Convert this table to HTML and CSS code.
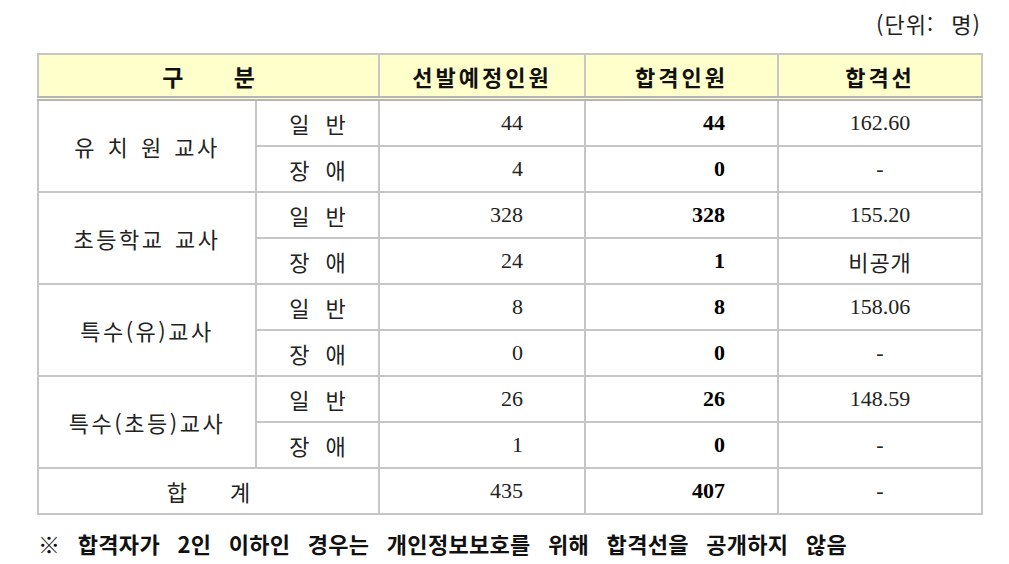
FILE: index.html
```html
<!DOCTYPE html>
<html lang="ko">
<head>
<meta charset="utf-8">
<title>합격 현황</title>
<link rel="stylesheet" href="styles.css">
</head>
<body>
<div class="page">
  <div class="unit">(단위: 명)</div>
  <table class="tbl">
    <colgroup>
      <col class="c1"><col class="c2"><col class="c3"><col class="c4"><col class="c5">
    </colgroup>
    <thead>
      <tr>
        <th colspan="2"><span class="wide">구 분</span></th>
        <th>선발예정인원</th>
        <th>합격인원</th>
        <th>합격선</th>
      </tr>
    </thead>
    <tbody>
      <tr>
        <td rowspan="2" class="cat">유 치 원 교사</td>
        <td class="sub">일 반</td>
        <td class="num plan">44</td>
        <td class="num pass">44</td>
        <td class="num cut">162.60</td>
      </tr>
      <tr>
        <td class="sub">장 애</td>
        <td class="num plan">4</td>
        <td class="num pass">0</td>
        <td class="num cut">-</td>
      </tr>
      <tr>
        <td rowspan="2" class="cat">초등학교 교사</td>
        <td class="sub">일 반</td>
        <td class="num plan">328</td>
        <td class="num pass">328</td>
        <td class="num cut">155.20</td>
      </tr>
      <tr>
        <td class="sub">장 애</td>
        <td class="num plan">24</td>
        <td class="num pass">1</td>
        <td class="cut kr">비공개</td>
      </tr>
      <tr>
        <td rowspan="2" class="cat">특수(유)교사</td>
        <td class="sub">일 반</td>
        <td class="num plan">8</td>
        <td class="num pass">8</td>
        <td class="num cut">158.06</td>
      </tr>
      <tr>
        <td class="sub">장 애</td>
        <td class="num plan">0</td>
        <td class="num pass">0</td>
        <td class="num cut">-</td>
      </tr>
      <tr>
        <td rowspan="2" class="cat">특수(초등)교사</td>
        <td class="sub">일 반</td>
        <td class="num plan">26</td>
        <td class="num pass">26</td>
        <td class="num cut">148.59</td>
      </tr>
      <tr>
        <td class="sub">장 애</td>
        <td class="num plan">1</td>
        <td class="num pass">0</td>
        <td class="num cut">-</td>
      </tr>
      <tr>
        <td colspan="2" class="total"><span class="wide2">합 계</span></td>
        <td class="num plan">435</td>
        <td class="num pass">407</td>
        <td class="num cut">-</td>
      </tr>
    </tbody>
  </table>
  <p class="note">※ 합격자가 2인 이하인 경우는 개인정보보호를 위해 합격선을 공개하지 않음</p>
</div>
</body>
</html>
```

FILE: styles.css
```css
html, body {
  margin: 0;
  padding: 0;
  background: #ffffff;
}

.page {
  width: 944px;
  padding: 9px 0 0 37px;
  font-family: "Noto Sans CJK KR", "Noto Sans", sans-serif;
  color: #111;
}

.unit {
  text-align: right;
  font-size: 22px;
  line-height: 28px;
  height: 44px;
  color: #222;
  word-spacing: 10px;
  letter-spacing: 1px;
}

.tbl {
  width: 944px;
  table-layout: fixed;
  border-collapse: collapse;
  border: 2px solid #ababab;
}

.c1 { width: 218px; }
.c2 { width: 123px; }
.c3 { width: 206px; }
.c4 { width: 193px; }
.c5 { width: 204px; }

.tbl th {
  background: #ffffcc;
  height: 41px;
  padding: 0;
  font-size: 22px;
  font-weight: 700;
  letter-spacing: 3px;
  text-align: center;
  border: 2px solid #c6c6c6;
  border-bottom: 5px double #b5b5b5;
  color: #111;
}

.tbl td {
  height: 44px;
  padding: 0;
  border: 2px solid #c6c6c6;
  font-size: 22px;
  text-align: center;
  color: #222;
}

.wide {
  font-size: 23px;
  letter-spacing: 0;
  word-spacing: 44px;
}

.wide2 {
  word-spacing: 37px;
}

.cat {
  letter-spacing: 2.5px;
  word-spacing: 2px;
}

.sub {
  word-spacing: 10px;
}

.tbl td.num {
  font-family: "Liberation Serif", "Times New Roman", serif;
  font-size: 22px;
}

.tbl td.plan {
  text-align: right;
  padding-right: 61px;
}

.tbl td.pass {
  text-align: right;
  padding-right: 52px;
  font-weight: 700;
  color: #000;
}

.tbl td.cut {
  text-align: center;
}

.tbl td.kr {
  font-size: 22px;
  letter-spacing: 1px;
}

.note {
  margin: 15px 0 0 1px;
  font-size: 22px;
  font-weight: 700;
  line-height: 26px;
  word-spacing: 11px;
  letter-spacing: 0.3px;
  color: #111;
  white-space: nowrap;
}
```
